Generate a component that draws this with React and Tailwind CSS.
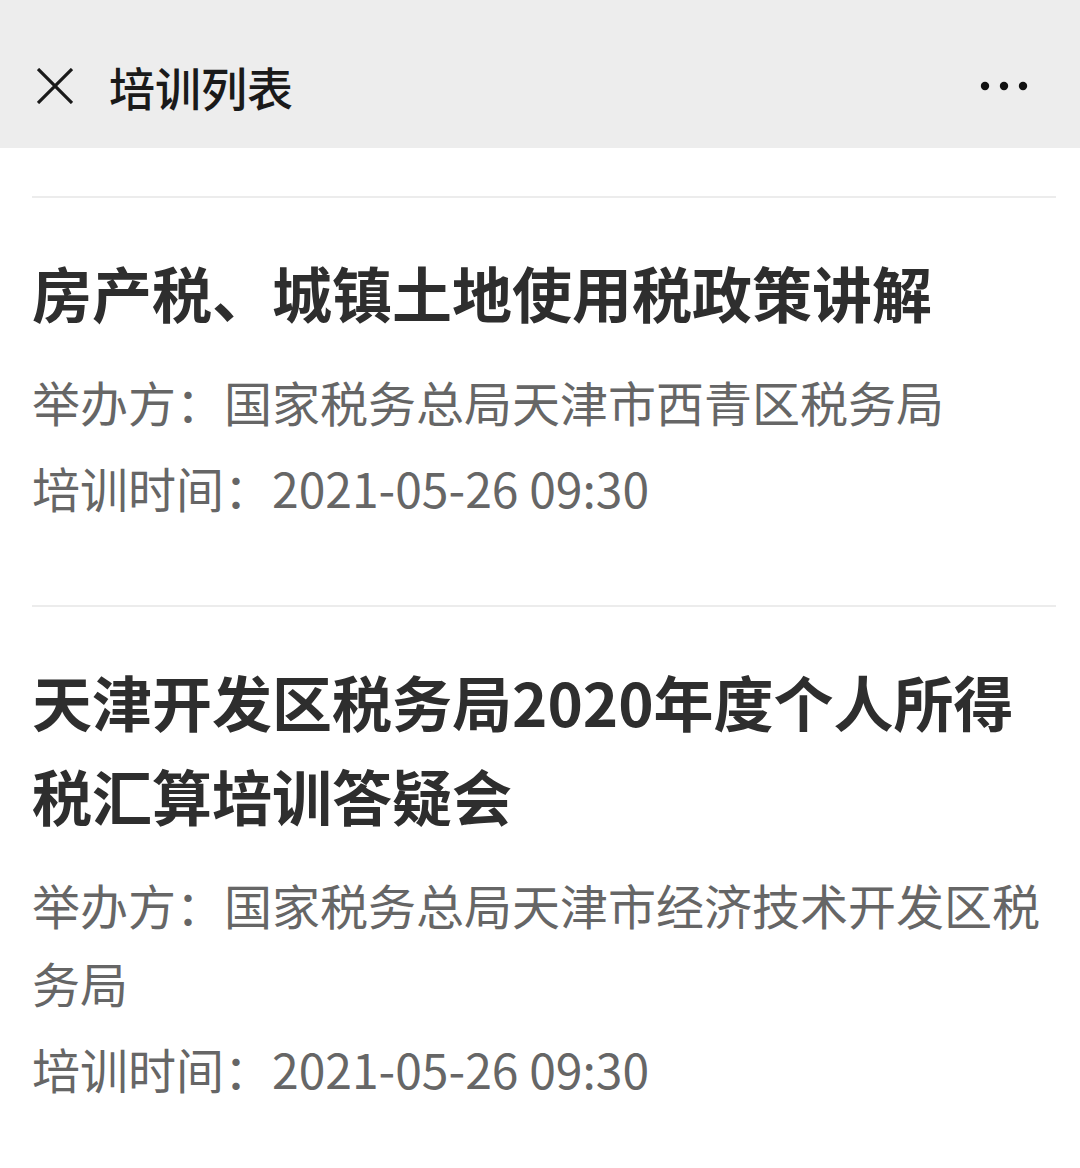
const items = [
  {
    title: '房产税、城镇土地使用税政策讲解',
    host: '国家税务总局天津市西青区税务局',
    time: '2021-05-26 09:30',
  },
  {
    title: '天津开发区税务局2020年度个人所得税汇算培训答疑会',
    host: '国家税务总局天津市经济技术开发区税务局',
    time: '2021-05-26 09:30',
  },
];

function CloseIcon() {
  return (
    <svg width="36" height="36" viewBox="0 0 36 36" className="shrink-0">
      <path d="M1 1 L35 35 M35 1 L1 35" stroke="#1a1a1a" strokeWidth="3.2" strokeLinecap="butt" />
    </svg>
  );
}

function MoreIcon() {
  return (
    <svg width="48" height="10" viewBox="0 0 48 10">
      <circle cx="5" cy="5" r="4.2" fill="#111" />
      <circle cx="24" cy="5" r="4.2" fill="#111" />
      <circle cx="43" cy="5" r="4.2" fill="#111" />
    </svg>
  );
}

export default function App() {
  return (
    <div
      className="w-[1080px] h-[1168px] overflow-hidden bg-white"
      style={{ fontFamily: '"Noto Sans CJK SC", "Noto Sans", sans-serif' }}
    >
      <div className="h-[148px] bg-[#ededed] flex items-center pt-[24px] pl-[37px] pr-[52px]">
        <CloseIcon />
        <div className="ml-[36px] text-[46px] leading-none font-medium text-[#1a1a1a] flex-1">培训列表</div>
        <MoreIcon />
      </div>

      <div className="pl-[32px] pr-[24px] pt-[48px]">
        {items.map((it, i) => (
          <div key={i} className="border-t-2 border-[#ececec] pt-[47px] pb-[79px]">
            <div className="text-[60px] leading-[94px] font-bold text-[#2e2e2e] pr-[20px]">{it.title}</div>
            <div className="mt-[23px] text-[48px] leading-[78px] text-[#666666]">
              举办方：{it.host}
            </div>
            <div className="mt-[8px] text-[48px] leading-[78px] text-[#666666]">
              培训时间：{it.time}
            </div>
          </div>
        ))}
      </div>
    </div>
  );
}
